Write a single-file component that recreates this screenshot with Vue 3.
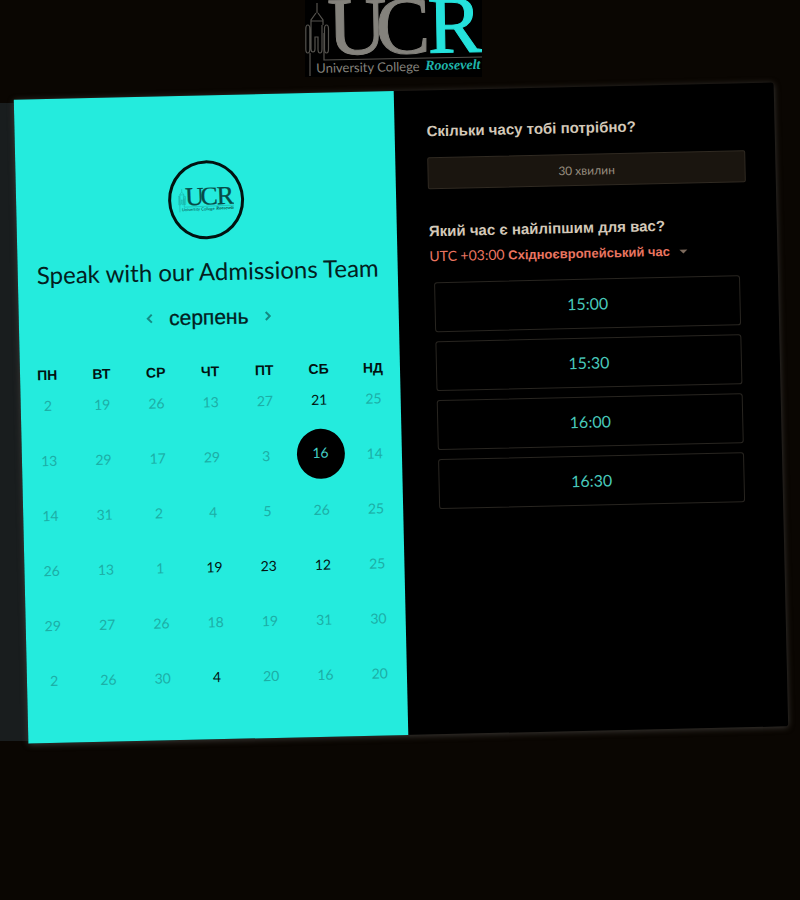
<script setup>
import { ref } from 'vue'

const weekdays = ['ПН', 'ВТ', 'СР', 'ЧТ', 'ПТ', 'СБ', 'НД']
const open = (n) => ({ n, open: true })
const shut = (n) => ({ n, open: false })
const weeks = [
  [shut(2), shut(19), shut(26), shut(13), shut(27), open(21), shut(25)],
  [shut(13), shut(29), shut(17), shut(29), shut(3), open(16), shut(14)],
  [shut(14), shut(31), shut(2), shut(4), shut(5), shut(26), shut(25)],
  [shut(26), shut(13), shut(1), open(19), open(23), open(12), shut(25)],
  [shut(29), shut(27), shut(26), shut(18), shut(19), shut(31), shut(30)],
  [shut(2), shut(26), shut(30), open(4), shut(20), shut(16), shut(20)],
]
const slots = ['15:00', '15:30', '16:00', '16:30']
const selected = ref('1-5')
</script>

<template>
  <div class="page">
    <svg class="defs" aria-hidden="true">
      <symbol id="ucr-logo" viewBox="0 0 177 77">
        <g fill="none" stroke="var(--logo-line)" stroke-width="1.200">
          <path d="M12 3v10M11 13l-5 7v5M13 13l5 7v5M6 21h12" />
          <path d="M0.800 29q0-4 2-4t2 4v20q0 4-2 4t-2-4zM6 25v24q0 3 2 3t2-3V37h3v12q0 4 2 4t2-4V25M19.500 29q0-4 2-4t2 4v20q0 4-2 4t-2-4z" />
          <path d="M5 53v23M19 33v27l158-3" />
        </g>
        <g transform="rotate(-1)">
          <g class="logo-caps">
            <text class="logo-main" x="22" y="55">U</text>
            <text class="logo-main" x="70" y="55">C</text>
            <text class="logo-accent" x="122" y="55">R</text>
          </g>
          <text class="logo-sub" x="10" y="73" fill="var(--logo-main)">University College</text>
          <text class="logo-name" x="119" y="72" fill="var(--logo-name)">Roosevelt</text>
        </g>
      </symbol>
    </svg>

    <header class="top">
      <svg class="logo" role="img" aria-label="University College Roosevelt"><use href="#ucr-logo" /></svg>
    </header>

    <main class="stage">
      <div class="card">
        <section class="calendar">
          <div class="avatar">
            <svg class="logo-small" aria-hidden="true"><use href="#ucr-logo" /></svg>
          </div>
          <h1>Speak with our Admissions Team</h1>
          <div class="month">
            <button type="button" aria-label="Попередній місяць">
              <svg viewBox="0 0 8 12"><path d="M6 2 2 6l4 4" /></svg>
            </button>
            <h2>серпень</h2>
            <button type="button" aria-label="Наступний місяць">
              <svg viewBox="0 0 8 12"><path d="m2 2 4 4-4 4" /></svg>
            </button>
          </div>
          <table>
            <thead>
              <tr><th v-for="d in weekdays" :key="d" scope="col">{{ d }}</th></tr>
            </thead>
            <tbody>
              <tr v-for="(week, w) in weeks" :key="w">
                <td v-for="(day, i) in week" :key="i">
                  <button
                    type="button"
                    class="day"
                    :class="{ selected: selected === `${w}-${i}` }"
                    :disabled="!day.open"
                    @click="selected = `${w}-${i}`"
                  >{{ day.n }}</button>
                </td>
              </tr>
            </tbody>
          </table>
        </section>

        <section class="times">
          <h3>Скільки часу тобі потрібно?</h3>
          <button type="button" class="duration">30 хвилин</button>
          <h3>Який час є найліпшим для вас?</h3>
          <button type="button" class="zone">
            <span>UTC +03:00 <b>Східноєвропейський час</b></span>
            <i class="caret"></i>
          </button>
          <div class="slots">
            <button v-for="s in slots" :key="s" type="button">{{ s }}</button>
          </div>
        </section>
      </div>
    </main>
  </div>
</template>

<style>
body {
  margin: 0;
  background: #0a0602;
}
</style>

<style scoped>
.page {
  min-height: 100vh;
  background: #0a0602;
  font-family: Lato, "Liberation Sans", sans-serif;
  color: #03201e;
}
.page *,
.page *::before {
  box-sizing: border-box;
}
h1, h2, h3 {
  margin: 0;
}
button {
  padding: 0;
  border: 0;
  background: none;
  color: inherit;
  font-family: inherit;
  cursor: pointer;
}
.defs {
  position: absolute;
  width: 0;
  height: 0;
}
.top {
  display: flex;
  justify-content: center;
  height: 91px;
  padding-right: 13px;
}
.logo {
  width: 177px;
  height: 77px;
  background: #000;
  --logo-main: #84827c;
  --logo-accent: #24e2dc;
  --logo-name: #1fb5ac;
  --logo-line: #55534e;
}
.logo-caps {
  font-family: "Liberation Serif", serif;
  font-size: 82px;
  stroke-width: 1px;
}
.logo-main {
  fill: var(--logo-main);
  stroke: var(--logo-main);
}
.logo-accent {
  fill: var(--logo-accent);
  stroke: var(--logo-accent);
}
.logo-sub {
  font-family: Lato, sans-serif;
  font-size: 13px;
}
.logo-name {
  font-family: "Liberation Serif", serif;
  font-size: 14px;
  font-style: italic;
  font-weight: 700;
}
.stage {
  padding: 0 19px 12px 21px;
  background: linear-gradient(#191d1e, #191d1e) no-repeat 0 12px / 32px calc(100% - 18px);
  background-position: 0 12px;
}
.card {
  display: grid;
  grid-template-columns: 1fr 1fr;
  min-height: 644px;
  background: #000;
  border-radius: 3px;
  box-shadow: 0 1px 6px #3e3b37;
  transform: rotate(-1.3deg);
}
.calendar {
  padding-top: 65px;
  background: #24ebdd;
  text-align: center;
}
.avatar {
  display: grid;
  place-items: center;
  width: 76px;
  height: 79px;
  margin: 0 auto;
  border: 3px solid #021210;
  border-radius: 50%;
}
.logo-small {
  width: 56px;
  height: 25px;
  --logo-main: #074a46;
  --logo-accent: #074a46;
  --logo-name: #074a46;
  --logo-line: #168f87;
}
h1 {
  margin-top: 16px;
  font-size: 24px;
  font-weight: 400;
  line-height: 32px;
  white-space: nowrap;
}
.month {
  display: flex;
  align-items: center;
  justify-content: center;
  gap: 15px;
  margin-top: 16px;
}
.month h2 {
  font-family: "Liberation Sans", sans-serif;
  font-size: 21px;
  font-weight: 400;
  line-height: 28px;
  -webkit-text-stroke: 0.3px currentColor;
}
.month button {
  display: flex;
}
.month svg {
  width: 8px;
  height: 12px;
  fill: none;
  stroke: #138a83;
  stroke-width: 2;
}
table {
  width: 100%;
  margin-top: 28px;
  table-layout: fixed;
  border-collapse: collapse;
}
th {
  height: 31px;
  padding: 0;
  vertical-align: top;
  font-family: "Liberation Sans", sans-serif;
  font-size: 14px;
  line-height: 24px;
  color: #021210;
}
td {
  height: 55px;
  padding: 0;
  vertical-align: top;
}
.day {
  display: block;
  width: 48px;
  height: 24px;
  margin: 0 auto;
  font-size: 14px;
  line-height: 24px;
  color: #021210;
}
.day:disabled {
  color: #1caea6;
  cursor: default;
}
.day.selected {
  height: 50px;
  margin: -14px auto -12px;
  padding-bottom: 2px;
  border-radius: 50%;
  background: #000;
  color: #45cfc6;
}
.times {
  padding: 31px 30px 0 32px;
}
h3 {
  font-family: "Liberation Sans", sans-serif;
  font-size: 15px;
  font-weight: 700;
  line-height: 20px;
  color: #d3c8b8;
}
.duration {
  display: block;
  width: 100%;
  height: 32px;
  margin: 16px 0 32px;
  border: 1px solid #302a22;
  border-radius: 2px;
  background: #1a150f;
  color: #968c7e;
  font-size: 12px;
}
.zone {
  display: flex;
  align-items: center;
  gap: 10px;
  margin-top: 5px;
  font-size: 14px;
  line-height: 20px;
  color: #ea7560;
  white-space: nowrap;
}
.zone b {
  font-family: "Liberation Sans", sans-serif;
  font-size: 13px;
}
.caret {
  border: 4px solid transparent;
  border-top-color: #7d6a5c;
  border-bottom-width: 0;
}
.slots {
  display: grid;
  gap: 9px;
  margin: 15px 8px 0 4px;
}
.slots button {
  height: 50px;
  padding-bottom: 2px;
  border: 1px solid #282520;
  border-radius: 3px;
  font-size: 16px;
  color: #48c9bb;
}
</style>
